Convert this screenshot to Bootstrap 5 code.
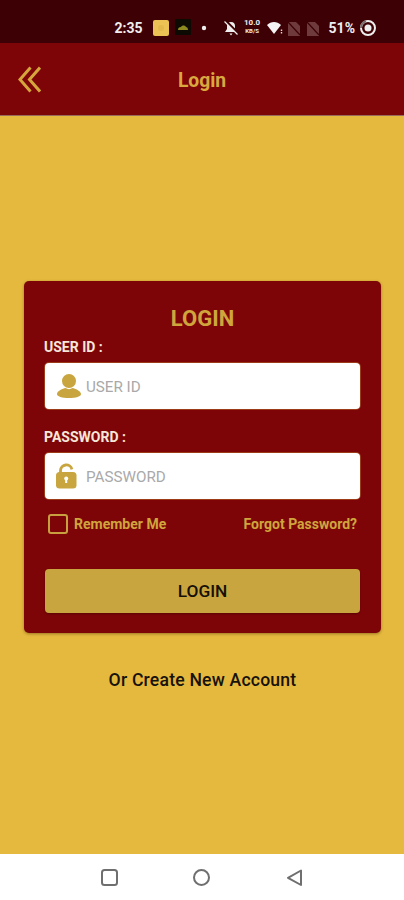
<!DOCTYPE html>
<html lang="en">

<head>
  <meta charset="UTF-8" />
  <meta name="viewport" content="width=device-width, initial-scale=1.0" />
  <title>Login</title>
  <link rel="stylesheet" href="https://cdn.jsdelivr.net/npm/bootstrap@5.3.0/dist/css/bootstrap.min.css" />
  <style>
    html, body { height: 100%; }
    body { font-family: Roboto, "Liberation Sans", sans-serif; background: #e5b83e; overflow: hidden; }
    .screen { height: 900px; }
    .status-bar { height: 43px; background: #3d0004; color: #eee; font-size: 14px; font-weight: 700; line-height: 18px; padding: 19px 27px 0 0; }
    .status-bar span, .status-bar svg { flex: none; display: block; }
    .sb-4 { margin-right: 4px; }
    .sb-5 { margin-right: 5px; }
    .sb-9 { margin-right: 9px; }
    .sb-14 { margin-right: 14px; }
    .status-bar .speed-text { width: 17px; font-size: 8px; line-height: 8px; text-align: center; }
    .status-bar .speed-text small { display: block; font-size: 6px; line-height: 7px; }
    .app-bar { height: 73px; background: #7d0508; border-bottom: 1px solid #9a6a5c; }
    .app-title { color: #d9a93f; font-size: 19.3px; font-weight: 700; left: 0; right: 0; text-align: center; line-height: 76px; top: 0; }
    .back-btn { margin-left: 18px; }
    .page-body { height: 738px; background: #e5b83e; padding: 165px 23px 0 24px; }
    .login-box { height: 352px; background: #7d0508; border-radius: 5px; padding: 23px 21px 0 21px; box-shadow: 0 1px 3px rgba(70, 40, 0, .45); }
    .login-head { color: #d0a63c; font-size: 22px; font-weight: 700; line-height: 28px; text-align: center; margin: 1px 0 5px; }
    .field-label { color: #f6e6d8; font-size: 14px; font-weight: 700; line-height: 18px; margin: 0 0 7px; display: block; margin-left: -1px; }
    .field-box { height: 46px; background: #fff; border-radius: 4px; padding-left: 10px; margin-bottom: 19px; box-shadow: 0 0 0 1px rgba(229, 184, 62, .3); }
    .field-box .form-control { border: 0; padding: 2px 0 0; margin-left: 4px; font-size: 15.2px; background: transparent; box-shadow: none; }
    .field-box .form-control::placeholder { color: #a9a9a9; opacity: 1; }
    .field-icon { width: 27px; flex: none; display: block; }
    .remember-row { padding: 0 3px; height: 20px; margin-top: -4px; }
    .check-box { width: 20px; height: 20px; border: 2px solid #c9a03f; border-radius: 3px; background: transparent; margin: 0 6px 0 0; flex: none; appearance: none; display: block; }
    .gold-text { color: #d0a63c; font-size: 14px; font-weight: 700; text-decoration: none; }
    .login-btn { width: 100%; height: 44px; margin-top: 35px; padding-top: 8px; background: #c8a53f; border: 0; border-radius: 4px; color: #161006; font-size: 17.3px; font-weight: 500; box-shadow: 0 1px 2px rgba(60, 0, 0, .5); }
    .create-link { color: #17120a; font-size: 17.6px; font-weight: 500; line-height: 22px; text-align: center; margin-top: 36px; letter-spacing: .2px; }
    .nav-bar { height: 46px; background: #fff; }
  </style>
</head>

<body>
  <div class="screen d-flex flex-column">
    <div class="status-bar d-flex align-items-start justify-content-end">
      <span class="sb-9">2:35</span>
      <svg class="sb-5" width="18" height="18" viewBox="0 0 18 18"><rect x="1" y="1" width="16" height="16" rx="2" fill="#ecc254"/><circle cx="9" cy="9" r="3" fill="#e2b84c"/></svg>
      <svg class="sb-9" width="16" height="16" viewBox="0 0 16 16"><rect width="16" height="16" rx="1" fill="#0c0a02"/><path d="M3 11c0-2 1-3 3-3 1-2 4-2 5 0 1 0 2 1 2 3z" fill="#8f8a20"/></svg>
      <svg class="sb-14" width="8" height="18" viewBox="0 0 8 18"><circle cx="4" cy="9" r="2.200" fill="#eee"/></svg>
      <svg class="sb-4" width="18" height="18" viewBox="0 0 18 18"><path d="M9 3c-3 0-4 2-4 4v3l-2 3h12l-2-3V7c0-2-1-4-4-4z" fill="#eee"/><path d="M7.500 14.500h3L9 16.500z" fill="#eee"/><path d="M3.500 1.500l13 13" stroke="#3d0004" stroke-width="2.400"/><path d="M2.500 2.500l13 13" stroke="#eee" stroke-width="1.300"/></svg>
      <span class="speed-text sb-5">10.0<small>KB/S</small></span>
      <svg class="sb-4" width="17" height="18" viewBox="0 0 17 18"><path d="M1 6c4-4 10-4 14 0l-7 9z" fill="#f4f4f4"/><path d="M15.500 10.500v1.500M15.500 13v1.500" stroke="#ddd" stroke-width="1.400"/></svg>
      <svg class="sb-5" width="14" height="18" viewBox="0 0 14 18"><path d="M1 3h8l4 4v10H1z" fill="#6e3a3c"/><path d="M1 3l12 13" stroke="#3d0004" stroke-width="1.200"/></svg>
      <svg class="sb-9" width="14" height="18" viewBox="0 0 14 18"><path d="M1 3h8l4 4v10H1z" fill="#6e3a3c"/><path d="M1 3l12 13" stroke="#3d0004" stroke-width="1.200"/></svg>
      <span class="sb-4">51%</span>
      <svg width="18" height="18" viewBox="0 0 18 18"><circle cx="9" cy="9" r="7" fill="none" stroke="#eee" stroke-width="2"/><circle cx="9" cy="9" r="3.500" fill="#eee"/><path d="M2 9a7 7 0 0 1 5-6.700" fill="none" stroke="#7a6a6a" stroke-width="2"/></svg>
    </div>

    <div class="app-bar position-relative d-flex align-items-center">
      <svg class="back-btn" width="23" height="27" viewBox="0 0 23 27" fill="none" stroke="#d6a63d" stroke-width="3"><path d="M12.500 1.500 2 13.500l10.500 12"/><path d="M22 1.500 11.500 13.500l10.500 12"/></svg>
      <div class="app-title position-absolute">Login</div>
    </div>

    <div class="page-body">
      <form class="login-box">
        <h1 class="login-head">LOGIN</h1>
        <label class="field-label" for="userId">USER ID :</label>
        <div class="field-box d-flex align-items-center">
          <svg class="field-icon" height="26" viewBox="0 0 27 26"><circle cx="14" cy="8" r="7" fill="#c8a53f"/><path d="M2 21c0-3 6-5.500 8.500-6 2 1.500 5 1.500 7 0 2.500.5 8.500 3 8.500 6 0 2.500-5 4-12 4S2 23.500 2 21z" fill="#c8a53f"/></svg>
          <input id="userId" class="form-control" type="text" placeholder="USER ID" />
        </div>
        <label class="field-label" for="passwordInput">PASSWORD :</label>
        <div class="field-box d-flex align-items-center">
          <svg class="field-icon" height="26" viewBox="0 0 27 26"><path d="M5.500 10V7.500a5.800 5.800 0 0 1 11.400-1.200" fill="none" stroke="#c8a53f" stroke-width="2.800"/><rect x="1" y="9" width="20.500" height="16.500" rx="3.500" fill="#c8a53f"/><circle cx="11.200" cy="15.500" r="2" fill="#fff"/><rect x="10.200" y="16" width="2" height="4" fill="#fff"/></svg>
          <input id="passwordInput" class="form-control" type="password" placeholder="PASSWORD" />
        </div>
        <div class="remember-row d-flex align-items-center justify-content-between">
          <label class="d-flex align-items-center gold-text">
            <input class="check-box" type="checkbox" />
            Remember Me
          </label>
          <a class="gold-text" href="#">Forgot Password?</a>
        </div>
        <button class="btn login-btn" type="button">LOGIN</button>
      </form>
      <div class="create-link">Or Create New Account</div>
    </div>

    <div class="nav-bar d-flex align-items-center justify-content-center">
      <svg width="404" height="46" viewBox="0 0 404 46" fill="none" stroke="#6f6f6f" stroke-width="2">
        <rect x="102" y="16" width="15" height="15" rx="2.500"/>
        <circle cx="201.500" cy="23.500" r="7.500"/>
        <path d="M301 16.500v14.500l-13-7.200z" stroke-linejoin="round"/>
      </svg>
    </div>
  </div>
  <script src="https://cdn.jsdelivr.net/npm/bootstrap@5.3.0/dist/js/bootstrap.bundle.min.js"></script>
</body>

</html>
